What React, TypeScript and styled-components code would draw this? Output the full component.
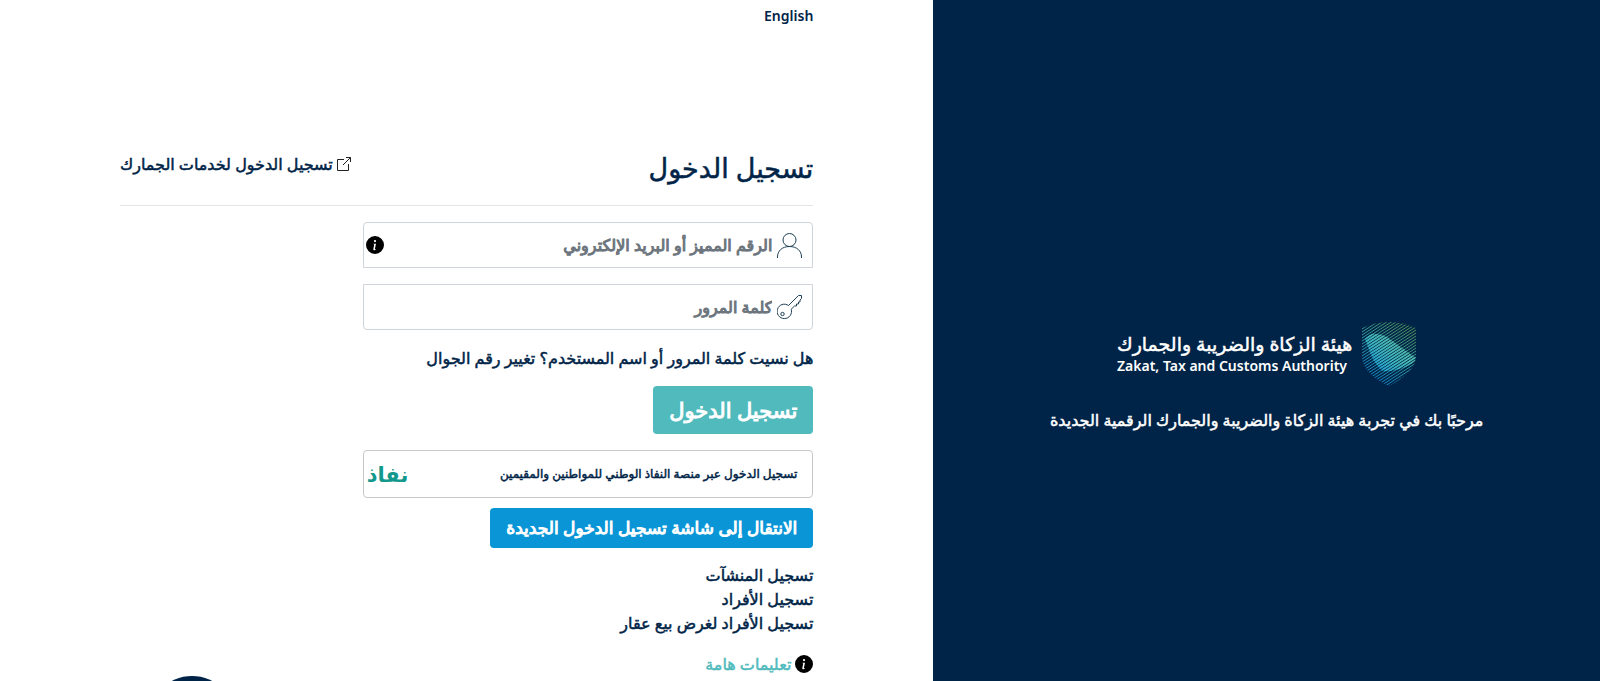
import React from "react";
import styled, { createGlobalStyle } from "styled-components";
import { BsInfoCircleFill } from "react-icons/bs";

const navy = "#002447";
const teal = "#50babd";
const blue = "#0995d6";

const GlobalStyle = createGlobalStyle`
  *, *::before, *::after { box-sizing: border-box; }
  body {
    margin: 0;
    overflow: hidden;
    background: #fff;
    color: ${navy};
    font-family: "Noto Sans", "DejaVu Sans", sans-serif;
    font-size: 16px;
    line-height: 24px;
    font-weight: 500;
    -webkit-text-stroke: 0.5px currentColor;
  }
  input, button { font: inherit; color: inherit; }
  a { color: inherit; text-decoration: none; }
`;

const Page = styled.div`
  display: grid;
  grid-template-columns: 5fr 7fr;
  min-height: 100vh;
`;

const BrandPanel = styled.aside`
  display: flex;
  flex-direction: column;
  align-items: center;
  justify-content: center;
  gap: 22px;
  padding: 72px 16px 0;
  background: ${navy};
  color: #fff;
`;

const Logo = styled.div`
  display: flex;
  align-items: center;
  gap: 10px;
`;

const LogoText = styled.div`
  display: flex;
  flex-direction: column;
`;

const LogoArabic = styled.span`
  font-size: 19px;
  line-height: 24px;
`;

const LogoLatin = styled.span`
  font-size: 14px;
  line-height: 20px;
  font-weight: 600;
  -webkit-text-stroke: 0;
`;

const Welcome = styled.p`
  margin: 0;
`;

const Main = styled.main`
  display: flex;
  flex-direction: column;
  padding: 4px 120px 0;
`;

const LanguageBar = styled.nav`
  display: flex;
  height: 140px;
  align-items: flex-start;
  font-size: 14px;
  font-weight: 600;
  -webkit-text-stroke: 0;
`;

const TitleRow = styled.header`
  display: flex;
  justify-content: space-between;
  height: 62px;
  padding-top: 8px;
  border-bottom: 1px solid #e3e5e6;
`;

const Title = styled.h1`
  margin: 0;
  font-size: 27px;
  line-height: 32px;
  font-weight: 500;
`;

const IconLink = styled.a<{ $tone?: string }>`
  display: inline-flex;
  align-items: center;
  align-self: flex-start;
  gap: 4px;
  color: ${(p) => p.$tone ?? navy};
`;

const Form = styled.form`
  display: flex;
  flex-direction: column;
  align-items: flex-start;
  width: 65%;
  padding-top: 16px;
`;

const Field = styled.label<{ $edge: "top" | "bottom" }>`
  display: flex;
  align-items: center;
  gap: 5px;
  width: 100%;
  height: 46px;
  margin-bottom: 16px;
  padding: 0 10px 0 2px;
  border: 1px solid #ced4da;
  border-radius: ${(p) => (p.$edge === "top" ? "4px 4px 0 0" : "0 0 4px 4px")};
`;

const FieldInput = styled.input`
  flex: 1;
  min-width: 0;
  height: 100%;
  padding: 0;
  border: 0;
  outline: 0;
  background: none;
  -webkit-text-stroke: 1px currentColor;
  &::placeholder {
    color: #6c757d;
    opacity: 1;
    -webkit-text-stroke: 1px #6c757d;
  }
`;

const ResetLine = styled.p`
  margin: 0 0 16px;
`;

const Button = styled.button<{ $tone: string; $large?: boolean }>`
  height: ${(p) => (p.$large ? 48 : 40)}px;
  padding: 0 16px;
  border: 0;
  border-radius: 4px;
  background: ${(p) => p.$tone};
  color: #fff;
  font-size: ${(p) => (p.$large ? 21 : 17)}px;
  -webkit-text-stroke: 1px #fff;
  cursor: pointer;
`;

const NafathButton = styled.button`
  display: flex;
  align-items: center;
  justify-content: space-between;
  width: 100%;
  height: 48px;
  margin: 16px 0 10px;
  padding: 0 15px 0 3px;
  border: 1px solid #c8c8c8;
  border-radius: 4px;
  background: #fff;
  font-size: 12px;
  -webkit-text-stroke: 0.5px currentColor;
  cursor: pointer;
`;

const NafathMark = styled.span`
  color: #12988c;
  font-size: 21px;
  font-weight: 700;
  -webkit-text-stroke: 0;
`;

const LinkList = styled.ul`
  margin: 15px 0 17px;
  padding: 0;
  list-style: none;
`;

const InfoIcon = styled(BsInfoCircleFill)`
  flex: none;
  width: 18px;
  height: 18px;
  color: #000;
`;

const ChatButton = styled.button`
  position: fixed;
  left: 147px;
  bottom: -85px;
  width: 90px;
  height: 90px;
  padding: 0;
  border: 0;
  border-radius: 50%;
  background: ${navy};
`;

const lines = Array.from({ length: 34 }, (_, i) => i * 3 + 1);

const Hatch = ({ stroke, width }: { stroke: string; width: number }) => (
  <g stroke={stroke} strokeWidth={width}>
    {lines.map((y) => (
      <line key={y} x1="0" y1={y} x2="54" y2={y - 35} />
    ))}
  </g>
);

const Shield = () => (
  <svg width="54" height="64" viewBox="0 0 54 64" aria-hidden="true">
    <defs>
      <linearGradient id="edge" gradientUnits="userSpaceOnUse" x1="46" y1="4" x2="12" y2="54">
        <stop offset="0" stopColor="#4f9159" />
        <stop offset="0.5" stopColor="#359a9a" />
        <stop offset="1" stopColor="#1487c4" />
      </linearGradient>
      <linearGradient id="core" gradientUnits="userSpaceOnUse" x1="40" y1="20" x2="14" y2="50">
        <stop offset="0" stopColor="#55bda8" />
        <stop offset="0.5" stopColor="#3db4bd" />
        <stop offset="1" stopColor="#1a9ed6" />
      </linearGradient>
      <clipPath id="shield">
        <path d="M0 6Q14 0 27 0T54 6V34C54 48 38 58 27 64C14 58 0 48 0 34Z" />
      </clipPath>
      <clipPath id="band">
        <path d="M3 17Q8 11 14 12Q20 12 25 15L54 36Q52 42 43 45Q32 50 21 49Q14 44 9 33Z" />
      </clipPath>
    </defs>
    <g clipPath="url(#shield)">
      <Hatch stroke="url(#edge)" width={1} />
    </g>
    <g clipPath="url(#band)">
      <Hatch stroke="url(#core)" width={1.8} />
    </g>
  </svg>
);

const PersonIcon = () => (
  <svg width="25" height="25" viewBox="0 0 25 25" fill="none" stroke="#1f4257" strokeWidth="1" aria-hidden="true">
    <circle cx="12.500" cy="7" r="6.500" />
    <path d="M.5 25V24C.5 18 5 13.500 12.500 13.500S24.500 18 24.500 24V25" />
  </svg>
);

const KeyIcon = () => (
  <svg width="25" height="25" viewBox="0 0 25 25" fill="none" stroke="#1f4257" strokeWidth="1" strokeLinejoin="round" aria-hidden="true">
    <path d="M11.500 10.500L21.500 .5H24.500V3.500L23 5V7H21.500V9H19.500V11H17.500L14.200 14.200A7.200 7.200 0 1 1 11.500 10.500Z" />
    <circle cx="5.500" cy="19" r="1.700" />
  </svg>
);

const ExternalIcon = () => (
  <svg width="14" height="14" viewBox="0 0 14 14" fill="none" stroke="#222" strokeWidth="1" aria-hidden="true">
    <path d="M7 2.500H.5V13.500H11.500V7M9 .5H13.500V5M13.500 .5L6 8" />
  </svg>
);

const accountLinks = ["تسجيل المنشآت", "تسجيل الأفراد", "تسجيل الأفراد لغرض بيع عقار"];

export default function App() {
  return (
    <>
      <GlobalStyle />
      <Page dir="rtl" lang="ar">
        <BrandPanel>
          <Logo>
            <Shield />
            <LogoText>
              <LogoArabic>هيئة الزكاة والضريبة والجمارك</LogoArabic>
              <LogoLatin dir="ltr" lang="en">Zakat, Tax and Customs Authority</LogoLatin>
            </LogoText>
          </Logo>
          <Welcome>مرحبًا بك في تجربة هيئة الزكاة والضريبة والجمارك الرقمية الجديدة</Welcome>
        </BrandPanel>
        <Main>
          <LanguageBar>
            <a href="#english" lang="en">English</a>
          </LanguageBar>
          <TitleRow>
            <Title>تسجيل الدخول</Title>
            <IconLink href="#customs">
              <ExternalIcon />
              تسجيل الدخول لخدمات الجمارك
            </IconLink>
          </TitleRow>
          <Form onSubmit={(e) => e.preventDefault()}>
            <Field $edge="top">
              <PersonIcon />
              <FieldInput type="text" aria-label="الرقم المميز أو البريد الإلكتروني" placeholder="الرقم المميز أو البريد الإلكتروني" />
              <InfoIcon aria-hidden="true" />
            </Field>
            <Field $edge="bottom">
              <KeyIcon />
              <FieldInput type="password" aria-label="كلمة المرور" placeholder="كلمة المرور" />
            </Field>
            <ResetLine>
              <a href="#forgot">هل نسيت كلمة المرور أو اسم المستخدم؟</a> <a href="#mobile">تغيير رقم الجوال</a>
            </ResetLine>
            <Button type="submit" $tone={teal} $large>تسجيل الدخول</Button>
            <NafathButton type="button">
              <span>تسجيل الدخول عبر منصة النفاذ الوطني للمواطنين والمقيمين</span>
              <NafathMark>نفاذ</NafathMark>
            </NafathButton>
            <Button type="button" $tone={blue}>الانتقال إلى شاشة تسجيل الدخول الجديدة</Button>
          </Form>
          <LinkList>
            {accountLinks.map((text) => (
              <li key={text}>
                <a href="#register">{text}</a>
              </li>
            ))}
          </LinkList>
          <IconLink href="#instructions" $tone={teal}>
            <InfoIcon aria-hidden="true" />
            تعليمات هامة
          </IconLink>
        </Main>
        <ChatButton type="button" aria-label="المساعدة" />
      </Page>
    </>
  );
}
